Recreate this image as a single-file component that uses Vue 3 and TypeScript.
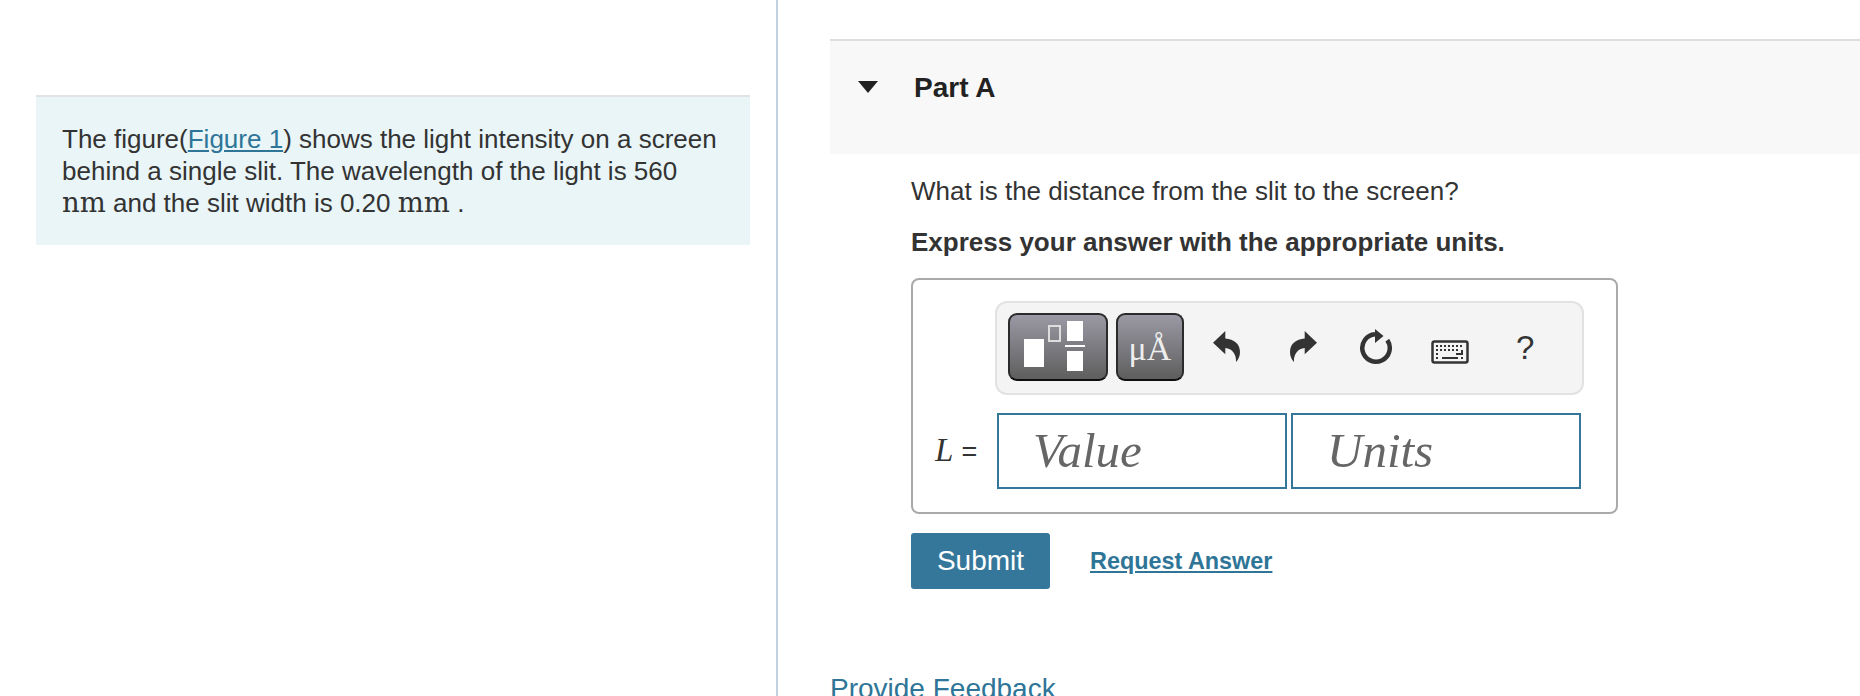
<script setup lang="ts">
const placeholders: string[] = ['Value', 'Units']
</script>

<template>
  <div class="page">
    <aside class="left">
      <div class="intro">
        The figure(<a class="fig-link">Figure 1</a>) shows the light intensity on a screen
        behind a single slit. The wavelength of the light is 560
        <span class="math">nm</span> and the slit width is 0.20 <span class="math">mm</span> .
      </div>
    </aside>

    <main class="right">
      <header class="part-head">
        <span class="caret"></span>
        <h2>Part A</h2>
      </header>

      <section class="part-body">
        <p class="question">What is the distance from the slit to the screen?</p>
        <p class="hint">Express your answer with the appropriate units.</p>

        <div class="answer-box">
          <div class="toolbar">
            <button class="tpl tpl-frac" type="button">
              <svg width="96" height="64" viewBox="0 0 96 64">
                <rect x="14" y="24" width="20" height="28" fill="#fff" />
                <rect x="39" y="11" width="11" height="15" fill="none" stroke="#ddd" stroke-width="2" />
                <rect x="57" y="6" width="16" height="20" fill="#fff" />
                <rect x="55" y="30" width="20" height="2" fill="#fff" />
                <rect x="57" y="36" width="16" height="20" fill="#fff" />
              </svg>
            </button>
            <button class="tpl tpl-unit" type="button">μÅ</button>

            <svg class="ico undo" width="27" height="32" viewBox="0 0 27 32">
              <path d="M0 11.700 12.300 0V7.500C21 8 27 13 27 21 27 25 25.500 28.500 23 31 23.500 23 19 17.500 12.300 17V23.300Z" fill="#333" />
            </svg>
            <svg class="ico redo" width="27" height="32" viewBox="0 0 27 32">
              <path d="M27 11.700 14.700 0V7.500C6 8 0 13 0 21 0 25 1.500 28.500 4 31 3.500 23 8 17.500 14.700 17V23.300Z" fill="#333" />
            </svg>
            <svg class="ico reload" width="36" height="36" viewBox="0 0 36 36">
              <path d="M29.300 11.100A13.750 13.750 0 1 1 17 5.250" fill="none" stroke="#333" stroke-width="4.500" />
              <path d="M17 0l8.500 7L17 14z" fill="#333" />
            </svg>
            <svg class="ico keys" width="38" height="24" viewBox="0 0 38 24">
              <rect x="1.500" y="1.500" width="35" height="21" rx="2" fill="none" stroke="#333" stroke-width="2.500" />
              <path d="M5 6h28M5 10h24M5 14h3M5 18h3M30 18h3" stroke="#333" stroke-width="2" stroke-dasharray="2 2" fill="none" />
              <path d="M11 18h16M31 10v4h-6" stroke="#333" stroke-width="2" fill="none" />
            </svg>
            <span class="help">?</span>
          </div>

          <div class="input-row">
            <span class="symbol"><i>L</i> <span class="eq">=</span></span>
            <input
              v-for="text in placeholders"
              :key="text"
              class="field"
              type="text"
              :placeholder="text"
            />
          </div>
        </div>

        <div class="actions">
          <button class="submit" type="button">Submit</button>
          <a class="request">Request Answer</a>
        </div>
      </section>

      <a class="feedback">Provide Feedback</a>
    </main>
  </div>
</template>

<style>
html,
body {
  overflow: hidden;
  background: #fff;
}
</style>

<style scoped>
.page {
  display: flex;
  height: 696px;
  overflow: hidden;
  font-family: 'Liberation Sans', Arial, sans-serif;
  color: #333;
}

.left {
  flex: 0 0 778px;
  box-sizing: border-box;
  padding: 95px 0 0 36px;
  border-right: 2px solid #c3d2e0;
}

.intro {
  box-sizing: border-box;
  width: 714px;
  height: 150px;
  padding: 26px 26px 0;
  border-top: 2px solid #dfe3e5;
  background: #e9f5f7;
  font-size: 26px;
  line-height: 32px;
}

.fig-link {
  color: #2e7597;
  text-decoration: underline;
}

.math {
  font-family: 'DejaVu Serif', 'Liberation Serif', serif;
  font-size: 27.500px;
  line-height: 1;
}

.right {
  flex: 1;
  min-width: 0;
  padding: 39px 0 0 52px;
}

.part-head {
  display: flex;
  box-sizing: border-box;
  height: 115px;
  padding: 31px 0 0 28px;
  border-top: 2px solid #dedede;
  background: #f8f8f8;
}

.caret {
  width: 0;
  height: 0;
  margin-top: 9px;
  border-top: 12px solid #222;
  border-left: 10.500px solid transparent;
  border-right: 10.500px solid transparent;
}

.part-head h2 {
  margin: 0 0 0 36px;
  font-size: 28px;
  line-height: 32px;
  font-weight: 700;
  color: #222;
}

.part-body {
  padding-left: 81px;
}

.question {
  margin: 21px 0 0;
  font-size: 26px;
  line-height: 32px;
}

.hint {
  margin: 19px 0 0;
  font-size: 26px;
  line-height: 32px;
  font-weight: 700;
}

.answer-box {
  box-sizing: border-box;
  width: 707px;
  height: 236px;
  margin-top: 20px;
  padding: 21px 22px 0;
  border: 2px solid #aaa;
  border-radius: 8px;
}

.toolbar {
  display: flex;
  align-items: center;
  box-sizing: border-box;
  width: 589px;
  height: 94px;
  margin-left: 60px;
  padding-left: 11px;
  border: 2px solid #e2e2e2;
  border-radius: 12px;
  background: #f4f4f4;
}

.tpl {
  box-sizing: border-box;
  height: 68px;
  margin-bottom: 2px;
  padding: 0;
  border: 2px solid #2b2b2b;
  border-bottom-color: #0e0e0e;
  border-radius: 9px;
  background: linear-gradient(#9b99a4, #5e5e5e);
}

.tpl-frac {
  width: 100px;
}

.tpl-frac svg {
  display: block;
}

.tpl-unit {
  width: 68px;
  margin-left: 8px;
  padding-top: 4px;
  color: #eee;
  font-family: 'Liberation Serif', serif;
  font-size: 34px;
  line-height: 1;
}

.undo {
  margin: 0 0 3px 29px;
}

.redo {
  margin: 0 0 3px 50px;
}

.reload {
  margin: 0 0 2px 41px;
}

.keys {
  margin: 8px 0 0 37px;
}

.help {
  margin: 0 0 2px 47px;
  font-size: 33px;
  line-height: 1;
}

.input-row {
  display: flex;
  align-items: center;
  margin-top: 18px;
}

.symbol {
  flex: 0 0 62px;
  margin-bottom: 2px;
  font-family: 'Liberation Serif', serif;
  font-size: 33px;
}

.eq {
  font-family: 'Liberation Sans', Arial, sans-serif;
  font-size: 27px;
}

.field {
  box-sizing: border-box;
  width: 290px;
  height: 76px;
  margin-right: 4px;
  padding: 0 0 2px 34px;
  border: 2px solid #35779a;
  border-radius: 0;
  outline: none;
  background: #fff;
  font-family: 'Liberation Serif', serif;
  font-size: 49px;
  font-style: italic;
}

.field::placeholder {
  color: #666;
  opacity: 1;
}

.actions {
  display: flex;
  align-items: center;
  margin-top: 19px;
}

.submit {
  width: 139px;
  height: 56px;
  padding: 0;
  border: 0;
  border-radius: 3px;
  background: #35779a;
  color: #fff;
  font-family: inherit;
  font-size: 28px;
}

.request {
  margin-left: 40px;
  color: #2e7597;
  font-size: 23.400px;
  font-weight: 700;
  text-decoration: underline;
}

.feedback {
  display: block;
  margin-top: 84px;
  color: #2e7597;
  font-size: 28px;
  line-height: 32px;
}
</style>
